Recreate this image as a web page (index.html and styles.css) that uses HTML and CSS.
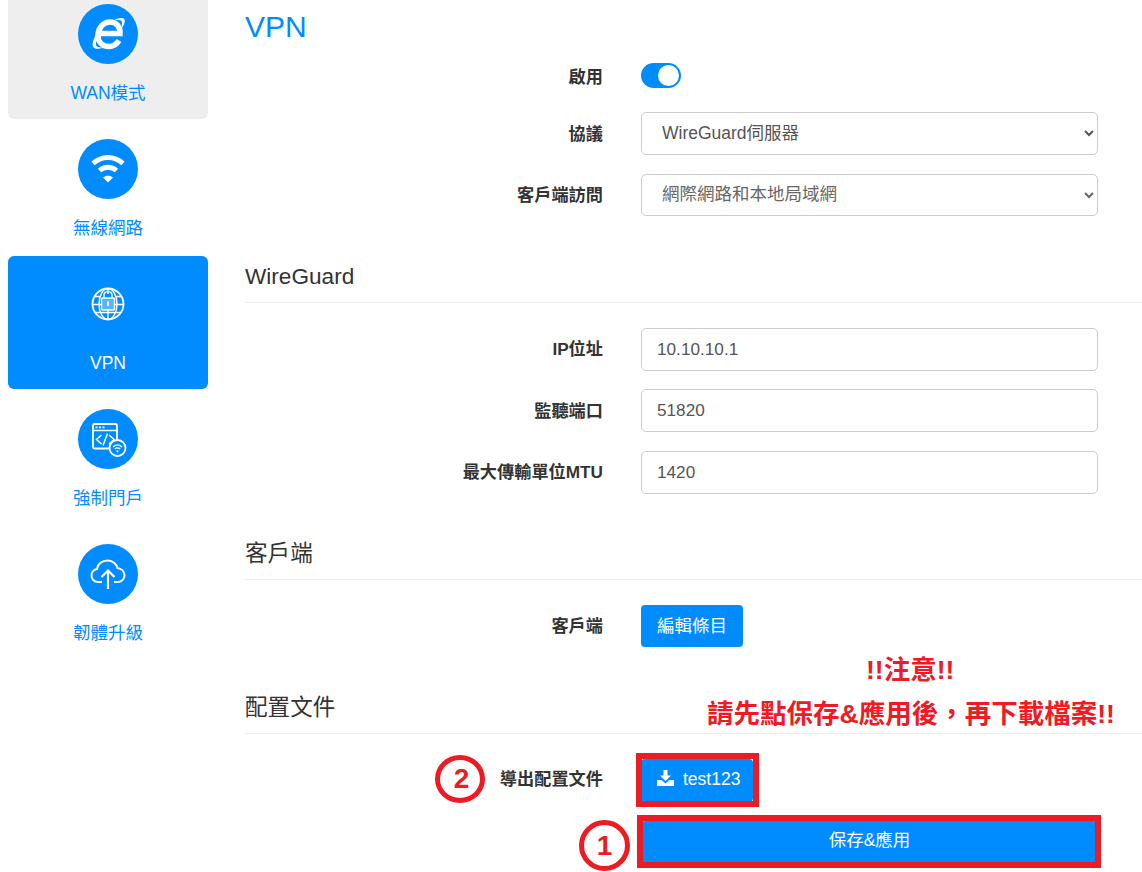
FILE: index.html
```html
<!DOCTYPE html>
<html lang="zh-TW">
  <head>
    <meta charset="UTF-8" />
    <title>VPN</title>
    <link rel="stylesheet" href="styles.css">
  </head>
  <body>
    <div class="page">
      <nav class="side-nav">
        <a class="nav-item nav-item-hover">
          <span class="nav-icon">
            <svg viewBox="0 0 60 60" width="60" height="60">
              <path d="M21 29.500H42C42.500 22.500 38 18 32 18C25 18 20.500 24 20 31C19.500 38 24.500 42.500 31 42.500C35.500 42.500 38.500 40.500 41 36.500" fill="none" stroke="#fff" stroke-width="5.500"/>
              <path d="M34 17C40 13.500 45.500 13 46.500 15.500C47.500 18 45.500 22 43 25.500C44 20.500 44.500 17.500 43 16.500C41 15.500 38 16 34 17ZM22 24C16 32 13 41 15.500 43.500C18 46 25 44.500 30 42.500C25 43.500 20.500 44 18.500 42C17 39.500 19 32 22 24Z" fill="#fff"/>
            </svg>
          </span>
          <span class="nav-label">WAN模式</span>
        </a>
        <a class="nav-item">
          <span class="nav-icon">
            <svg viewBox="0 0 60 60" width="60" height="60">
              <path d="M15 24.500C24 16.500 36 16.500 45 24.500" fill="none" stroke="#fff" stroke-width="5"/>
              <path d="M21.500 31.500C26.500 27 33.500 27 38.500 31.500" fill="none" stroke="#fff" stroke-width="5"/>
              <path d="M30 43.500L25 38.500C28 36.200 32 36.200 35 38.500Z" fill="#fff"/>
            </svg>
          </span>
          <span class="nav-label">無線網路</span>
        </a>
        <a class="nav-item nav-item-active">
          <span class="nav-icon">
            <svg viewBox="0 0 60 60" width="60" height="60" fill="none" stroke="#fff">
              <circle cx="30" cy="30" r="15.500" stroke-width="1.800"/>
              <ellipse cx="30" cy="30" rx="9" ry="15.500" stroke-width="1.400"/>
              <path d="M17 22.500H23M37 22.500H43M14.500 30.500H23M37 30.500H45.500M17 38.500H43M30 14.500V20M30 36V45.500" stroke-width="1.400"/>
              <rect x="23.500" y="24" width="13" height="12" rx="1" fill="#fff" fill-opacity="0.35" stroke-width="1.400"/>
              <path d="M26 24V21C26 16.500 34 16.500 34 21V24" stroke-width="1.400"/>
              <path d="M30 27.500V32" stroke-width="1.800"/>
            </svg>
          </span>
          <span class="nav-label">VPN</span>
        </a>
        <a class="nav-item">
          <span class="nav-icon">
            <svg viewBox="0 0 60 60" width="60" height="60" fill="none" stroke="#fff">
              <path d="M32 39.500H16.500C15.500 39.500 15 39 15 38V16.500C15 15.500 15.500 15 16.500 15H37.500C38.500 15 39 15.500 39 16.500V31" stroke-width="1.800"/>
              <path d="M15 21.500H39" stroke-width="1.500"/>
              <path d="M17.500 18.300H19.500M21 18.300H23M24.500 18.300H26.500" stroke-width="1.800"/>
              <path d="M23.500 26L18.500 30.500L23.500 35M31 26L36 30.500L31 35M29.500 24.500L25 36.500" stroke-width="1.500"/>
              <circle cx="39.500" cy="39" r="8" fill="#008cff" stroke-width="1.800"/>
              <path d="M35 38C37.800 35.300 41.200 35.300 44 38M36.800 40C38.500 38.500 40.500 38.500 42.200 40" stroke-width="1.300"/>
              <circle cx="39.500" cy="42.300" r="1.100" fill="#fff" stroke="none"/>
            </svg>
          </span>
          <span class="nav-label">強制門戶</span>
        </a>
        <a class="nav-item">
          <span class="nav-icon">
            <svg viewBox="0 0 60 60" width="60" height="60" fill="none" stroke="#fff" stroke-width="2">
              <path d="M24 38H20C16 38 13.500 35 13.500 31.500C13.500 28 16 25.500 19 25C19.500 20 24 16.500 29.500 16.500C34.500 16.500 38.500 20 39.500 24C43.500 24.500 46.500 27.500 46.500 31.500C46.500 35 43.500 38 40 38H36"/>
              <path d="M30 45V27M23.500 33L30 26.500L36.500 33" stroke-width="2.200"/>
            </svg>
          </span>
          <span class="nav-label">韌體升級</span>
        </a>
      </nav>

      <main class="content">
        <h1 class="page-title">VPN</h1>
        <div class="form-row form-row-switch">
          <label class="form-label">啟用</label>
          <span class="switch"><span class="switch-knob"></span></span>
        </div>
        <div class="form-row">
          <label class="form-label">協議</label>
          <select class="form-control form-select"><option>WireGuard伺服器</option></select>
        </div>
        <div class="form-row">
          <label class="form-label">客戶端訪問</label>
          <select class="form-control form-select form-select-muted"><option>網際網路和本地局域網</option></select>
        </div>

        <h2 class="section-title section-wireguard">WireGuard</h2>
        <div class="form-row">
          <label class="form-label">IP位址</label>
          <input class="form-control" type="text" value="10.10.10.1">
        </div>
        <div class="form-row">
          <label class="form-label">監聽端口</label>
          <input class="form-control" type="text" value="51820">
        </div>
        <div class="form-row">
          <label class="form-label">最大傳輸單位MTU</label>
          <input class="form-control" type="text" value="1420">
        </div>

        <h2 class="section-title section-client">客戶端</h2>
        <div class="form-row">
          <label class="form-label">客戶端</label>
          <button class="btn">編輯條目</button>
        </div>

        <h2 class="section-title section-config">配置文件</h2>
        <div class="form-row form-row-export">
          <label class="form-label">導出配置文件</label>
          <button class="btn btn-export">
            <svg viewBox="0 0 17 16" width="17" height="16" fill="#fff">
              <path d="M6.500 0H10.500V5.500H14L8.500 11L3 5.500H6.500Z"/>
              <path d="M0 10H4.500L8.500 13.500L12.500 10H17V16H0Z"/>
            </svg>
            test123
          </button>
        </div>
        <div class="form-row form-row-save">
          <button class="btn btn-save">保存&amp;應用</button>
        </div>
      </main>
    </div>

    <!-- red notes drawn over the screenshot -->
    <div class="note note-top">!!注意!!</div>
    <div class="note note-bottom">請先點保存&amp;應用後，再下載檔案!!</div>
    <div class="mark-box mark-export"></div>
    <div class="mark-box mark-save"></div>
    <div class="mark-circle mark-two">2</div>
    <div class="mark-circle mark-one">1</div>
  </body>
</html>
```

FILE: styles.css
```css
:root {
  --brand: #008cff;
  --text: #333;
  --line: #eee;
  --field: #ccc;
  --mark: #ed1c24;
}

* {
  margin: 0;
  padding: 0;
  box-sizing: border-box;
}

html, body {
  height: 872px;
  overflow: hidden;
  background: #fff;
}

body {
  font-family: "Liberation Sans", "Noto Sans CJK TC", sans-serif;
  font-size: 17.2px;
  color: var(--text);
  position: relative;
}

.page {
  display: flex;
  align-items: flex-start;
}

.side-nav {
  width: 200px;
  margin: -14px 0 0 8px;
  display: flex;
  flex-direction: column;
  gap: 2px;
  flex: none;
}

.nav-item {
  height: 133px;
  padding-top: 18px;
  border-radius: 6px;
  display: flex;
  flex-direction: column;
  align-items: center;
  color: var(--brand);
}

.nav-item-hover {
  background: #eee;
}

.nav-item-active {
  background: var(--brand);
  color: #fff;
}

.nav-icon {
  width: 60px;
  height: 60px;
  border-radius: 50%;
  background: var(--brand);
  display: block;
}

.nav-icon svg {
  display: block;
}

.nav-label {
  margin-top: 17px;
  line-height: 24px;
  font-size: 17.5px;
}

.content {
  margin-left: 37px;
  flex: 1;
}

.page-title {
  font-size: 30px;
  font-weight: 400;
  color: var(--brand);
  line-height: 32px;
  margin-top: 11px;
  margin-bottom: 20px;
}

.form-row {
  display: flex;
  align-items: center;
  min-height: 43px;
  margin-bottom: 18.5px;
}

.form-row-switch {
  min-height: 25px;
  margin-bottom: 24px;
}

.form-label {
  width: 358px;
  margin-right: 38px;
  padding-bottom: 3px;
  text-align: right;
  font-weight: 700;
  font-size: 17.2px;
  flex: none;
}

.form-row-switch .form-label {
  padding-bottom: 0;
}

.form-row-export .form-label {
  padding-bottom: 6px;
}

.switch {
  width: 40px;
  height: 25px;
  border-radius: 13px;
  background: var(--brand);
  display: flex;
  justify-content: flex-end;
  align-items: center;
  padding-right: 2px;
}

.switch-knob {
  width: 21px;
  height: 21px;
  border-radius: 50%;
  background: #fff;
}

.form-control {
  width: 457px;
  height: 43px;
  border: 1px solid var(--field);
  border-radius: 5px;
  background: #fff;
  padding: 0 15px;
  font-family: inherit;
  font-size: 17.2px;
  color: #555;
}

.form-select {
  padding: 0 0 2px 16px;
  font-size: 17.5px;
}

.form-select-muted {
  height: 42px;
  color: #666;
}

.section-title {
  font-size: 22.6px;
  font-weight: 400;
  line-height: 32px;
  padding-bottom: 9px;
  border-bottom: 1px solid var(--line);
  margin-top: 44px;
  margin-bottom: 25px;
}

.section-config {
  margin-top: 44.5px;
}

.btn {
  height: 42px;
  padding: 0 16px 4px;
  border: none;
  border-radius: 4px;
  background: var(--brand);
  color: #fff;
  font-family: inherit;
  font-size: 17.5px;
  display: flex;
  align-items: center;
  justify-content: center;
  gap: 9px;
}

.btn-export {
  height: 43px;
  padding-right: 13px;
  padding-bottom: 2px;
}

.btn-export svg {
  margin-bottom: 3px;
}

.form-row-save {
  padding-left: 396px;
}

.btn-save {
  width: 457px;
  height: 43px;
  padding-bottom: 7px;
}

/* annotations */
.note {
  position: absolute;
  color: var(--mark);
  font-weight: 700;
  font-size: 26.5px;
  line-height: 32px;
  white-space: nowrap;
}

.note-top {
  left: 866px;
  top: 654px;
}

.note-bottom {
  left: 707px;
  top: 698px;
}

.mark-box {
  position: absolute;
  border: 6px solid var(--mark);
}

.mark-export {
  left: 636px;
  top: 753px;
  width: 123px;
  height: 54px;
}

.mark-save {
  left: 637px;
  top: 815px;
  width: 464px;
  height: 53px;
}

.mark-circle {
  position: absolute;
  border: 5px solid var(--mark);
  border-radius: 50%;
  color: var(--mark);
  font-weight: 700;
  font-size: 28px;
  display: flex;
  align-items: center;
  justify-content: center;
}

.mark-two {
  left: 435px;
  top: 755px;
  width: 50px;
  height: 48px;
  padding-left: 3px;
}

.mark-one {
  left: 579px;
  top: 820px;
  width: 51px;
  height: 51px;
}
```
